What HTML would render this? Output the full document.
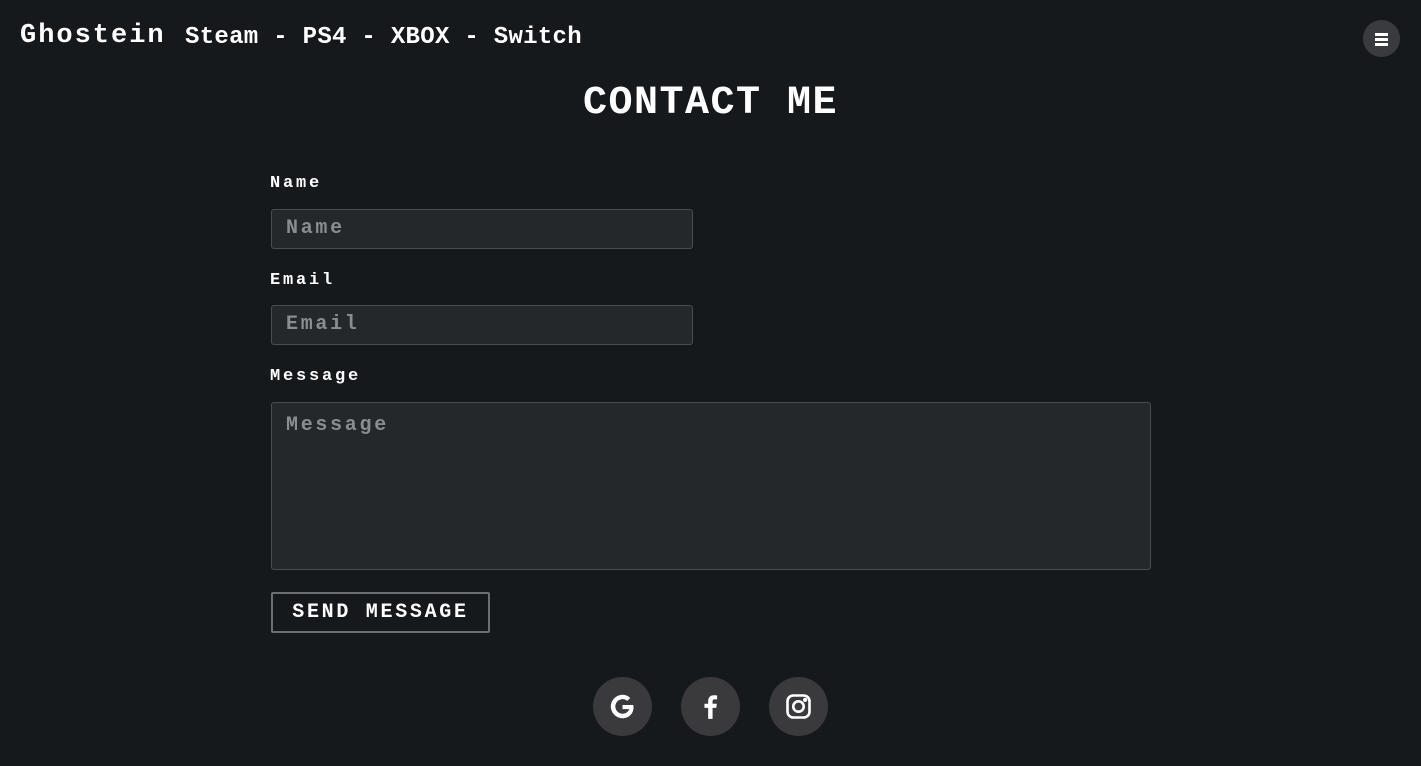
<!DOCTYPE html>
<html><head><style>
*{box-sizing:border-box;margin:0;padding:0}
body{width:1421px;height:766px;background:#16191c;color:#fff;font-family:"Liberation Mono",monospace;font-weight:bold;position:relative;overflow:hidden}
.brand{position:absolute;left:20px;top:21px;font-size:27px;letter-spacing:2px}
.sub{position:absolute;left:185px;top:24px;font-size:24px;letter-spacing:0.3px}
.menu{position:absolute;left:1363px;top:20px;width:37px;height:37px;border-radius:50%;background:#3a3b3e}
.menu i{position:absolute;left:12px;width:13px;height:2.5px;background:#fff}
h1{position:absolute;left:0;width:1421px;text-align:center;top:84px;font-size:40px;line-height:40px;letter-spacing:1.5px}
label{position:absolute;left:270px;font-size:17px;letter-spacing:2.8px}
.in{position:absolute;left:271px;width:422px;height:40px;background:#25282b;border:1px solid #4a4d50;border-radius:3px;color:#8a8d90;font-size:20px;letter-spacing:2.7px;padding:7px 14px}
.ta{width:880px;height:168px;padding-top:11px}
.btn{position:absolute;left:271px;top:592px;width:219px;height:41px;border:2px solid #6c6f72;border-radius:2px;font-size:20px;letter-spacing:2.7px;text-align:center;line-height:37px}
.c{position:absolute;top:677px;width:59px;height:59px;border-radius:50%;background:#3a3a3d}
.c svg{position:absolute;left:13px;top:13px}
</style></head><body>
<div class="brand">Ghostein</div>
<div class="sub">Steam - PS4 - XBOX - Switch</div>
<div class="menu"><i style="top:13px"></i><i style="top:18px"></i><i style="top:23px"></i></div>
<h1>CONTACT ME</h1>
<label style="top:174px">Name</label>
<div class="in" style="top:209px">Name</div>
<label style="top:271px">Email</label>
<div class="in" style="top:305px">Email</div>
<label style="top:367px">Message</label>
<div class="in ta" style="top:402px">Message</div>
<div class="btn">SEND MESSAGE</div>
<div class="c" style="left:593px"><svg width="33" height="33" viewBox="0 0 24 24"><path d="M20 12.5c0 4.7-3.4 8-8 8a8.5 8.5 0 1 1 5.7-14.8l-2.2 2.2A5.3 5.3 0 1 0 17 13.9h-5v-3h7.8c.1.5.2 1 .2 1.6z" fill="#fff"/></svg></div>
<div class="c" style="left:681px"><svg width="33" height="33" viewBox="0 0 24 24"><path d="M13.5 21v-8h2.7l.4-3h-3.1V8.3c0-.9.3-1.5 1.6-1.5h1.7V3.9c-.3 0-1.3-.1-2.4-.1-2.4 0-4.1 1.5-4.1 4.2V10H7.6v3h2.7v8z" fill="#fff"/></svg></div>
<div class="c" style="left:769px"><svg width="33" height="33" viewBox="0 0 24 24" fill="none" stroke="#fff" stroke-width="1.9"><rect x="4" y="4" width="16" height="16" rx="4.2"/><circle cx="12" cy="12" r="3.8"/><circle cx="16.8" cy="7.2" r=".6" fill="#fff"/></svg></div>
</body></html>
